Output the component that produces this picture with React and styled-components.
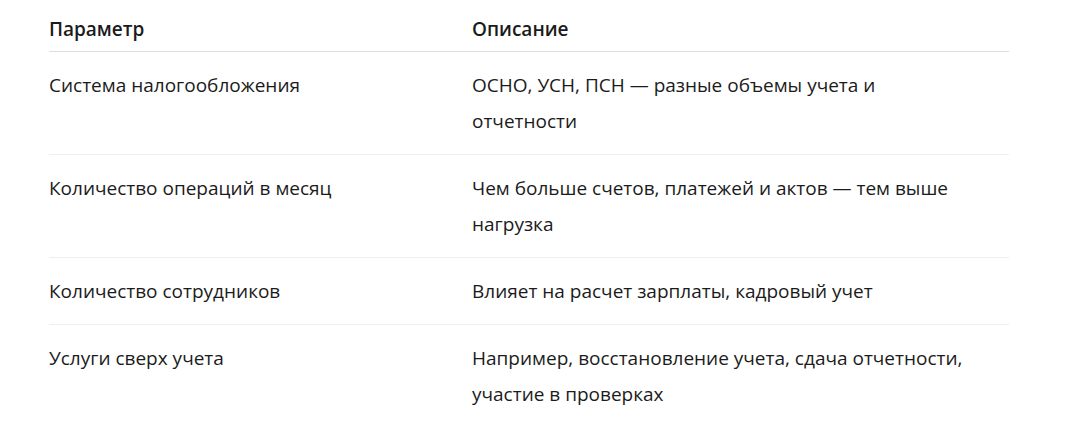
import styled, { createGlobalStyle } from 'styled-components';

const GlobalStyle = createGlobalStyle`
    body {
        margin: 0;
        background: #ffffff;
        font-family: 'Open Sans', 'Noto Sans', sans-serif;
        color: #1b1b1b;
    }
`

const Table = styled.div`
    width: 960px;
    margin: 0 0 0 49px;
    font-size: 19px;
    line-height: 36px;
`

const Row = styled.div`
    display: grid;
    grid-template-columns: 423px 1fr;
    border-bottom: 1px solid ${props => props.$head ? '#dedede' : '#eeeeee'};
    &:last-child {
        border-bottom: none;
    }
`

const Cell = styled.div`
    padding: ${props => props.$head ? '11px 30px 4px 0' : '15px 30px 15px 0'};
    font-weight: ${props => props.$head ? 600 : 400};
`

const rows = [
    ['Система налогообложения', 'ОСНО, УСН, ПСН — разные объемы учета и отчетности'],
    ['Количество операций в месяц', 'Чем больше счетов, платежей и актов — тем выше нагрузка'],
    ['Количество сотрудников', 'Влияет на расчет зарплаты, кадровый учет'],
    ['Услуги сверх учета', 'Например, восстановление учета, сдача отчетности, участие в проверках'],
];

function App(){
    return (
        <>
            <GlobalStyle />
            <Table>
                <Row $head>
                    <Cell $head>Параметр</Cell>
                    <Cell $head>Описание</Cell>
                </Row>
                {rows.map(([param, desc]) => (
                    <Row key={param}>
                        <Cell>{param}</Cell>
                        <Cell>{desc}</Cell>
                    </Row>
                ))}
            </Table>
        </>
    )
}

export default App;
